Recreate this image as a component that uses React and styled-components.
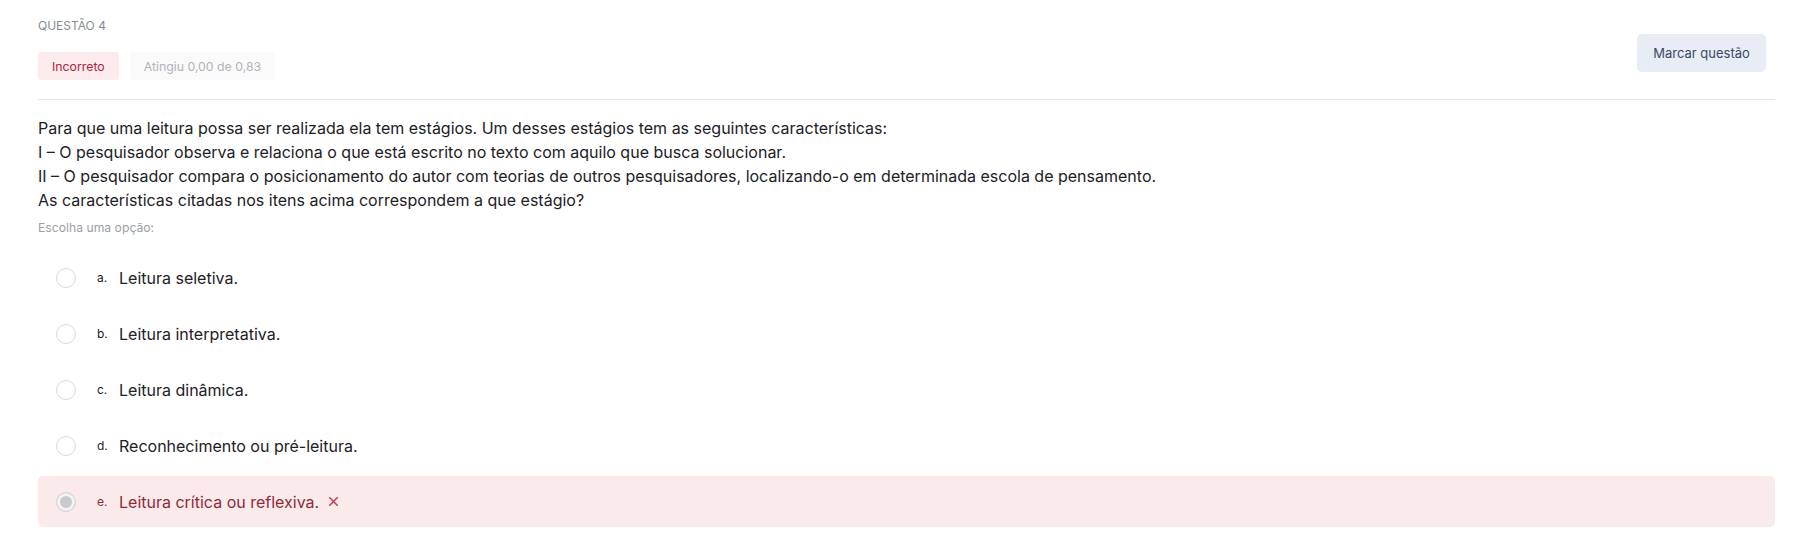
import styled, { createGlobalStyle } from "styled-components";

const GlobalStyle = createGlobalStyle`
  body {
    margin: 0;
    background: #ffffff;
    font-family: Inter, "Noto Sans", sans-serif;
    color: #1d2125;
  }
`;

const options = [
  { letter: "a.", text: "Leitura seletiva." },
  { letter: "b.", text: "Leitura interpretativa." },
  { letter: "c.", text: "Leitura dinâmica." },
  { letter: "d.", text: "Reconhecimento ou pré-leitura." },
  { letter: "e.", text: "Leitura crítica ou reflexiva.", chosen: true },
];

function App() {
  return (
    <>
      <GlobalStyle />
      <StPage>
        <StHeader>
          <StInfo>
            <StQuestionNo>QUESTÃO 4</StQuestionNo>
            <StBadges>
              <StBadge $variant="wrong">Incorreto</StBadge>
              <StBadge>Atingiu 0,00 de 0,83</StBadge>
            </StBadges>
          </StInfo>
          <StFlagButton>Marcar questão</StFlagButton>
        </StHeader>

        <StQuestionText>
          <p>
            Para que uma leitura possa ser realizada ela tem estágios. Um desses estágios tem as
            seguintes características:
          </p>
          <p>I – O pesquisador observa e relaciona o que está escrito no texto com aquilo que busca solucionar.</p>
          <p>
            II – O pesquisador compara o posicionamento do autor com teorias de outros pesquisadores,
            localizando-o em determinada escola de pensamento.
          </p>
          <p>As características citadas nos itens acima correspondem a que estágio?</p>
        </StQuestionText>

        <StPrompt>Escolha uma opção:</StPrompt>

        <StAnswers>
          {options.map((item) => (
            <StAnswer key={item.letter} $chosen={item.chosen}>
              <StRadio $chosen={item.chosen} />
              <StLetter>{item.letter}</StLetter>
              <StAnswerText>{item.text}</StAnswerText>
              {item.chosen ? (
                <StCross viewBox="0 0 16 16">
                  <path d="M3.5 3.5 L12.5 12.5 M12.5 3.5 L3.5 12.5" />
                </StCross>
              ) : null}
            </StAnswer>
          ))}
        </StAnswers>
      </StPage>
    </>
  );
}
export default App;

const StPage = styled.div`
  padding: 15px 25px 30px 38px;
`;

const StHeader = styled.div`
  display: flex;
  justify-content: space-between;
  align-items: flex-start;
  padding-bottom: 19px;
  border-bottom: 1px solid #e6e6e6;
`;

const StInfo = styled.div`
  display: flex;
  flex-direction: column;
`;

const StQuestionNo = styled.div`
  font-size: 12px;
  line-height: 22px;
  color: #868c93;
`;

const StBadges = styled.div`
  display: flex;
  gap: 11px;
  margin-top: 15px;
`;

const StBadge = styled.div`
  height: 28px;
  padding: 0 14px;
  display: flex;
  align-items: center;
  border-radius: 3px;
  font-size: 12.3px;
  background: ${({ $variant }) => ($variant === "wrong" ? "#fcebec" : "#fafafb")};
  color: ${({ $variant }) => ($variant === "wrong" ? "#a8283e" : "#b0b4ba")};
`;

const StFlagButton = styled.button`
  margin-top: 19px;
  margin-right: 9px;
  width: 129px;
  height: 38px;
  border: none;
  border-radius: 5px;
  background: #e8ecf4;
  color: #3a4a66;
  font-family: Inter, "Noto Sans", sans-serif;
  font-size: 13px;
`;

const StQuestionText = styled.div`
  margin-top: 16px;
  font-size: 16px;
  line-height: 24px;
  color: #1d2125;

  p {
    margin: 0;
  }
`;

const StPrompt = styled.div`
  margin-top: 7px;
  font-size: 12.2px;
  line-height: 18px;
  color: #9ba0a7;
`;

const StAnswers = styled.div`
  display: flex;
  flex-direction: column;
  gap: 5px;
  margin-top: 15px;
`;

const StAnswer = styled.div`
  display: flex;
  align-items: center;
  height: 51px;
  padding-left: 18px;
  border-radius: 5px;
  background: ${({ $chosen }) => ($chosen ? "#fbeaea" : "transparent")};
  color: ${({ $chosen }) => ($chosen ? "#8f2a3c" : "#1d2125")};
`;

const StRadio = styled.span`
  width: 20px;
  height: 20px;
  border-radius: 50%;
  box-sizing: border-box;
  border: 1px solid #d6d8db;
  background: #ffffff;
  flex-shrink: 0;
  ${({ $chosen }) =>
    $chosen &&
    `
    background: #c9cacd;
    box-shadow: inset 0 0 0 3px #f3f3f4;
  `}
`;

const StLetter = styled.span`
  margin-left: 21px;
  width: 22px;
  font-size: 12px;
`;

const StAnswerText = styled.span`
  font-size: 16px;
  line-height: 24px;
`;

const StCross = styled.svg`
  width: 15px;
  height: 15px;
  margin-left: 7px;
  fill: none;
  stroke: #c0394f;
  stroke-width: 1.5;
`;
